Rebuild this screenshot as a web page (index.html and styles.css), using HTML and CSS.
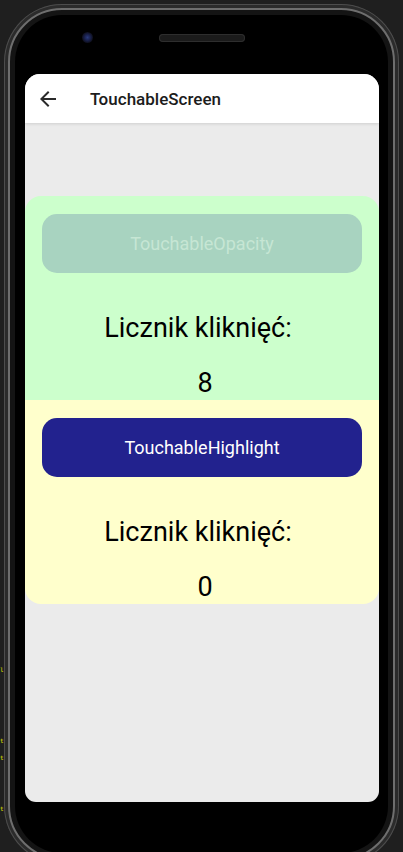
FILE: index.html
```html
<!DOCTYPE html>
<html lang="pl">
<head>
<meta charset="utf-8">
<title>TouchableScreen</title>
<link rel="stylesheet" href="styles.css">
</head>
<body>
<div class="editor-bits">
  <span class="bit b1">l</span>
  <span class="bit b2">t</span>
  <span class="bit b3">t</span>
  <span class="bit b4">t</span>
</div>
<div class="device">
  <div class="rim">
    <div class="bezel">
      <div class="sensors">
        <span class="camera"></span>
        <span class="speaker"></span>
      </div>
      <div class="screen">
        <header class="appbar">
          <svg class="back" viewBox="0 0 24 24" width="24" height="24" aria-hidden="true">
            <path d="M20 11H7.83l5.59-5.59L12 4l-8 8 8 8 1.41-1.41L7.83 13H20v-2z"/>
          </svg>
          <h1 class="title">TouchableScreen</h1>
        </header>
        <main class="content">
          <section class="card card-green">
            <div class="btn btn-opacity">TouchableOpacity</div>
            <p class="label">Licznik kliknięć:</p>
            <p class="count">8</p>
          </section>
          <section class="card card-yellow">
            <div class="btn btn-highlight">TouchableHighlight</div>
            <p class="label">Licznik kliknięć:</p>
            <p class="count">0</p>
          </section>
        </main>
      </div>
    </div>
  </div>
</div>
</body>
</html>
```

FILE: styles.css
```css
html, body {
  margin: 0;
  padding: 0;
}
body {
  background: #1f1f1f;
  width: 403px;
  height: 852px;
  overflow: hidden;
  position: relative;
  font-family: Roboto, "Noto Sans", sans-serif;
}

.editor-bits {
  position: absolute;
  left: 0;
  top: 0;
  width: 4px;
  height: 852px;
}
.bit {
  position: absolute;
  left: 0;
  font-family: "DejaVu Sans Mono", monospace;
  font-size: 6px;
  line-height: 8px;
  color: #e6e600;
}
.b1 { top: 666px; }
.b2 { top: 737px; }
.b3 { top: 754px; }
.b4 { top: 805px; }

.device {
  margin: 4px 0 0 4px;
  width: 395px;
  height: 860px;
  box-sizing: border-box;
  border-radius: 58px;
  background: #2b2b2b;
  padding: 4px;
  box-shadow: inset 0 0 0 1px #4d4d4d;
}
.rim {
  height: 100%;
  box-sizing: border-box;
  border-radius: 54px;
  background: #141414;
  border: 2px solid #6e6e6e;
  padding: 5px;
}
.bezel {
  height: 100%;
  border-radius: 47px;
  background: #000;
}

.sensors {
  display: flex;
  align-items: center;
  padding-top: 17px;
  height: 11px;
}
.camera {
  width: 11px;
  height: 11px;
  margin-left: 67px;
  border-radius: 50%;
  background: radial-gradient(circle at 50% 50%, #2a3a7a 0, #1a2250 35%, #0e0f1c 70%);
}
.speaker {
  width: 86px;
  height: 8px;
  margin-left: 66px;
  border-radius: 5px;
  background: #1b1b1b;
  box-shadow: inset 0 0 0 1px #2e2e2e;
}

.screen {
  margin: 31px 0 0 10px;
  width: 354px;
  height: 728px;
  border-radius: 15px 15px 11px 11px;
  overflow: hidden;
  background: #ebebeb;
  display: flex;
  flex-direction: column;
}

.appbar {
  height: 49px;
  background: #fff;
  display: flex;
  align-items: center;
  box-shadow: 0 1px 3px rgba(0, 0, 0, 0.12);
  position: relative;
  z-index: 1;
}
.back {
  margin-left: 11px;
  fill: #2a2a2a;
}
.title {
  margin: 0 0 0 30px;
  font-family: "Roboto Medium", Roboto, sans-serif;
  font-size: 17px;
  font-weight: 500;
  color: #1c1c1c;
}

.content {
  padding-top: 73px;
  display: flex;
  flex-direction: column;
}
.card {
  height: 204px;
  box-sizing: border-box;
  padding: 18px 17px 0;
  display: flex;
  flex-direction: column;
  align-items: stretch;
}
.card-green {
  background: #ccffcc;
  border-radius: 16px 16px 0 0;
}
.card-yellow {
  background: #ffffcc;
  border-radius: 0 0 16px 16px;
}
.btn {
  height: 59px;
  border-radius: 15px;
  display: flex;
  align-items: center;
  justify-content: center;
  font-size: 18px;
  margin-bottom: 38px;
}
.btn-opacity {
  background: #a8d3c0;
  color: #c6e6d4;
}
.btn-highlight {
  background: #22228e;
  color: #ffffff;
}
.label, .count {
  margin: 0;
  text-align: center;
  font-size: 27px;
  line-height: 34px;
  color: #000;
}
.label {
  padding-right: 8px;
}
.count {
  margin-top: 21px;
  padding-left: 6px;
}
```
